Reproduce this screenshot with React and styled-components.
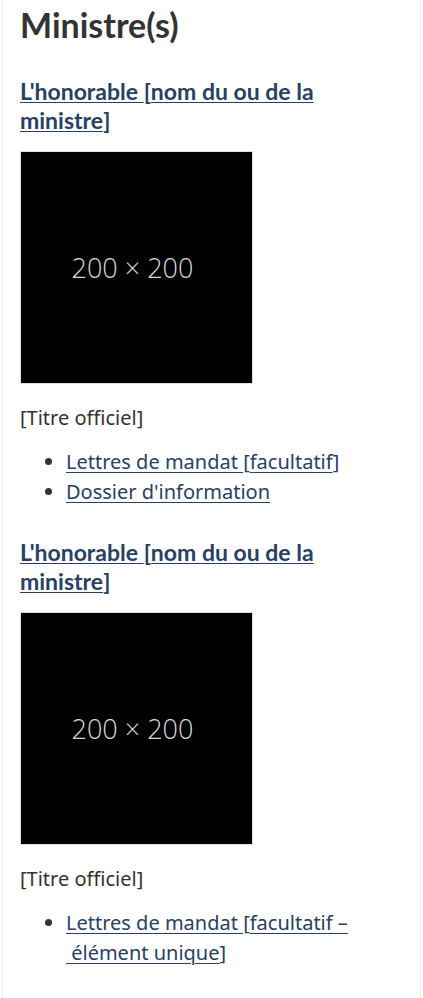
import React from 'react';
import styled, { createGlobalStyle } from 'styled-components';

const GlobalStyle = createGlobalStyle`
  html, body {
    margin: 0;
    padding: 0;
    background: #fff;
  }
  body {
    font-family: "Noto Sans", "Liberation Sans", sans-serif;
    color: #333;
  }
`;

const ministers = [
  {
    links: [
      { lead: 'Lettres de mandat ', inner: 'facultatif' },
      { plain: "Dossier d'information" },
    ],
  },
  {
    links: [
      { lead: 'Lettres de mandat ', inner: 'facultatif –', tail: '\u00a0élément unique' },
    ],
  },
];

const renderLink = link => {
  if (link.plain) return link.plain;
  if (link.tail) {
    return <>
      {link.lead}<Bracket>[</Bracket>{link.inner}<br />
      <NoWrap>{link.tail}<Bracket>]</Bracket></NoWrap>
    </>;
  }
  return <>
    {link.lead}<NoWrap><Bracket>[</Bracket>{link.inner}<Bracket>]</Bracket></NoWrap>
  </>;
};

export default function App() {
  return <>
    <GlobalStyle />
    <Panel>
      <Heading>Ministre(s)</Heading>
      {ministers.map((minister, idx) => (
        <Minister key={idx}>
          <NameTitle>
            <NameLink href="#">
              L'honorable <Bracket>[</Bracket>nom du ou de la <NoWrap>ministre<Bracket>]</Bracket></NoWrap>
            </NameLink>
          </NameTitle>
          <Placeholder>
            <PlaceholderLabel>200 × 200</PlaceholderLabel>
          </Placeholder>
          <OfficialTitle>[Titre officiel]</OfficialTitle>
          <LinkList>
            {minister.links.map((link, i) => (
              <LinkItem key={i}>
                <ItemLink href="#">{renderLink(link)}</ItemLink>
              </LinkItem>
            ))}
          </LinkList>
        </Minister>
      ))}
    </Panel>
  </>;
}

const Panel = styled.section`
  margin: 0 2px;
  min-height: 998px;
  box-sizing: border-box;
  border-left: 1px solid #ececec;
  border-right: 1px solid #ececec;
  padding: 4px 17px 20px;
`;

const Heading = styled.h2`
  margin: 0 0 31px;
  font-family: Lato, "Liberation Sans", sans-serif;
  font-weight: 700;
  font-size: 34px;
  line-height: 42px;
  color: #333;
`;

const Minister = styled.div`
  margin-bottom: 31px;
`;

const NameTitle = styled.h3`
  margin: 0 0 16px;
  font-family: Lato, "Liberation Sans", sans-serif;
  font-weight: 700;
  font-size: 23px;
  line-height: 29px;
`;

const NameLink = styled.a`
  color: #284162;
  text-decoration: underline;
  text-decoration-thickness: 1px;
  text-underline-offset: 2px;
`;

const NoWrap = styled.span`
  white-space: nowrap;
`;

const Bracket = styled.span`
  display: inline-block;
`;

const Placeholder = styled.div`
  width: 231px;
  height: 231px;
  border: 1px solid #ddd;
  background: #000;
  display: flex;
  align-items: center;
  justify-content: center;
`;

const PlaceholderLabel = styled.span`
  margin-right: 8px;
  font-family: "Open Sans", "Noto Sans", sans-serif;
  font-size: 27px;
  font-weight: 300;
  color: #d8d8d8;
`;

const OfficialTitle = styled.p`
  margin: 19px 0 14px;
  font-size: 20px;
  line-height: 30px;
`;

const LinkList = styled.ul`
  margin: 0;
  padding: 0 0 0 46px;
`;

const LinkItem = styled.li`
  font-size: 20px;
  line-height: 30px;
`;

const ItemLink = styled.a`
  color: #284162;
  text-decoration: underline;
  text-decoration-thickness: 1px;
  text-underline-offset: 3px;
`;
